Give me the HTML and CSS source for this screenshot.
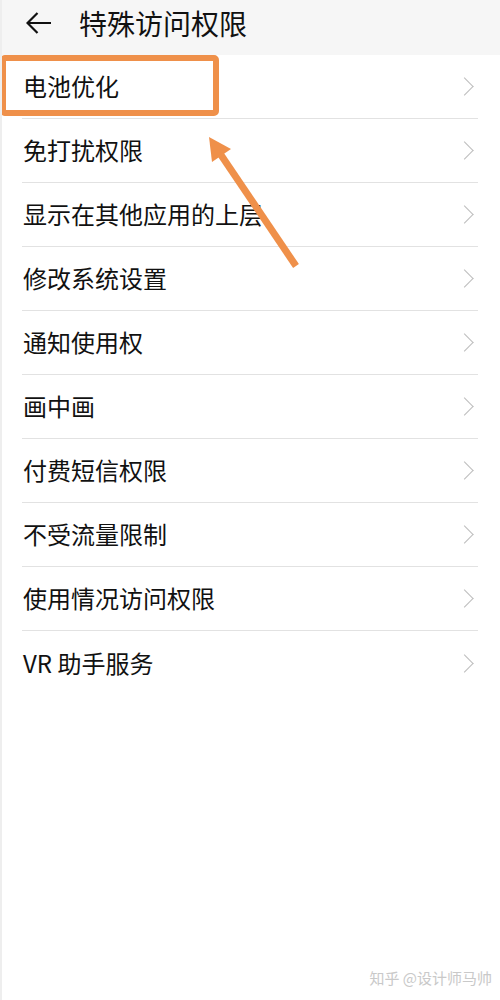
FILE: index.html
```html
<!DOCTYPE html>
<html lang="zh-CN">
<head>
    <meta charset="UTF-8">
    <meta name="viewport" content="width=device-width, initial-scale=1.0">
    <title>特殊访问权限</title>
    <link rel="stylesheet" href="styles.css">
</head>
<body>
    <!-- 顶部标题栏 -->
    <header class="top-bar">
        <svg class="back-icon" viewBox="0 0 26 22" width="26" height="22">
            <path d="M1.5 11H25M11.5 1L1.5 11l10 10" fill="none" stroke="#111" stroke-width="2.2"/>
        </svg>
        <h1 class="title">特殊访问权限</h1>
    </header>

    <!-- 权限列表 -->
    <ul class="menu-list">
        <li class="menu-item"><span>电池优化</span><i class="chevron"></i></li>
        <li class="menu-item"><span>免打扰权限</span><i class="chevron"></i></li>
        <li class="menu-item"><span>显示在其他应用的上层</span><i class="chevron"></i></li>
        <li class="menu-item"><span>修改系统设置</span><i class="chevron"></i></li>
        <li class="menu-item"><span>通知使用权</span><i class="chevron"></i></li>
        <li class="menu-item"><span>画中画</span><i class="chevron"></i></li>
        <li class="menu-item"><span>付费短信权限</span><i class="chevron"></i></li>
        <li class="menu-item"><span>不受流量限制</span><i class="chevron"></i></li>
        <li class="menu-item"><span>使用情况访问权限</span><i class="chevron"></i></li>
        <li class="menu-item"><span>VR 助手服务</span><i class="chevron"></i></li>
    </ul>

    <!-- 标注：高亮框和箭头 -->
    <div class="highlight-box"></div>
    <svg class="pointer-arrow" viewBox="0 0 120 160" width="120" height="160">
        <line x1="106" y1="146" x2="31" y2="35" stroke="#ef904a" stroke-width="7"/>
        <polygon points="19,17 41,29 22,42" fill="#ef904a"/>
    </svg>

    <div class="watermark">知乎 @设计师马帅</div>
</body>
</html>
```

FILE: styles.css
```css
/* 页面基础 */
body {
    margin: 0;
    background-color: #fff;
    font-family: "Noto Sans CJK SC", "Noto Sans", sans-serif;
    color: #111;
    min-height: 1000px;
    position: relative;
    border-left: 2px solid #eee;
    box-sizing: border-box;
}

/* 顶部标题栏 */
.top-bar {
    height: 55px;
    background-color: #f6f6f6;
    display: flex;
    align-items: center;
    padding-left: 24px;
    box-sizing: border-box;
}

.back-icon {
    margin-top: -10px;
}

.title {
    margin: -10px 0 0 27px;
    font-size: 28px;
    font-weight: normal;
    line-height: 1;
}

/* 列表 */
.menu-list {
    list-style: none;
    margin: 0;
    padding: 0;
}

.menu-item {
    height: 64px;
    margin: 0 22px 0 20px;
    display: flex;
    align-items: center;
    justify-content: space-between;
    border-bottom: 1px solid #e2e2e2;
    font-size: 24px;
    box-sizing: border-box;
}

.menu-item span {
    padding-left: 1px;
    margin-top: -2px;
}

.menu-item:last-child {
    border-bottom: none;
}

.chevron {
    width: 12px;
    height: 12px;
    border-top: 1.5px solid #bdbdbd;
    border-right: 1.5px solid #bdbdbd;
    transform: rotate(45deg);
    margin-right: 7px;
}

/* 标注层 */
.highlight-box {
    position: absolute;
    left: -2px;
    top: 55px;
    width: 219px;
    height: 61px;
    border: 6px solid #ef904a;
    border-radius: 5px;
    box-sizing: border-box;
}

.pointer-arrow {
    position: absolute;
    left: 188px;
    top: 120px;
}

.watermark {
    position: absolute;
    right: 8px;
    top: 967px;
    font-size: 15px;
    color: #c9c9c9;
}
```
